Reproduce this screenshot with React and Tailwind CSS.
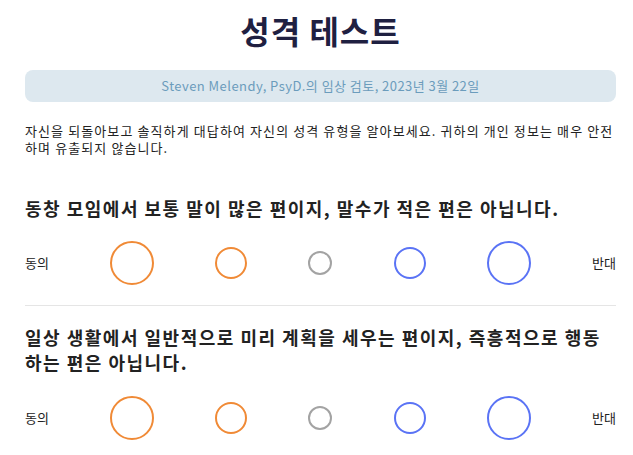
import React from "react";

const font = { fontFamily: '"Noto Sans CJK KR", "Noto Sans", sans-serif' };

function Row() {
  return (
    <div className="flex items-center justify-between">
      <span className="text-[13px] text-[#222] w-[24px] whitespace-nowrap">동의</span>
      <span className="block w-[44px] h-[44px] rounded-full border-2 border-[#f08a36]" />
      <span className="block w-[32px] h-[32px] rounded-full border-2 border-[#f08a36]" />
      <span className="block w-[24px] h-[24px] rounded-full border-2 border-[#a3a3a3]" />
      <span className="block w-[32px] h-[32px] rounded-full border-2 border-[#5a73f5]" />
      <span className="block w-[44px] h-[44px] rounded-full border-2 border-[#5a73f5]" />
      <span className="text-[13px] text-[#222] w-[24px] whitespace-nowrap text-right flex justify-end">반대</span>
    </div>
  );
}

export default function App() {
  return (
    <div className="bg-white w-[633px] h-[455px] overflow-hidden pl-[25px] pr-[17px]" style={font}>
      <h1 className="text-center text-[32px] font-bold tracking-[1px] text-[#1f2041] leading-[40px] pt-[10px]">성격 테스트</h1>
      <div className="mt-[20px] h-[32px] rounded-[8px] bg-[#dde8ef] flex items-center justify-center text-[13px] tracking-[0.45px] text-[#6b9cbc]">
        Steven Melendy, PsyD.의 임상 검토, 2023년 3월 22일
      </div>
      <p className="mt-[20px] text-[13px] tracking-[1.1px] leading-[17px] text-[#222]">
        자신을 되돌아보고 솔직하게 대답하여 자신의 성격 유형을 알아보세요. 귀하의 개인 정보는 매우 안전하며 유출되지 않습니다.
      </p>
      <h2 className="mt-[40px] text-[18px] tracking-[1.5px] font-bold leading-[25px] text-[#222]">
        동창 모임에서 보통 말이 많은 편이지, 말수가 적은 편은 아닙니다.
      </h2>
      <div className="mt-[20px]">
        <Row />
      </div>
      <div className="mt-[20px] border-t border-[#e5e5e5]" />
      <h2 className="mt-[19px] text-[18px] tracking-[1.5px] font-bold leading-[25px] text-[#222]">
        일상 생활에서 일반적으로 미리 계획을 세우는 편이지, 즉흥적으로 행동하는 편은 아닙니다.
      </h2>
      <div className="mt-[21px]">
        <Row />
      </div>
    </div>
  );
}
